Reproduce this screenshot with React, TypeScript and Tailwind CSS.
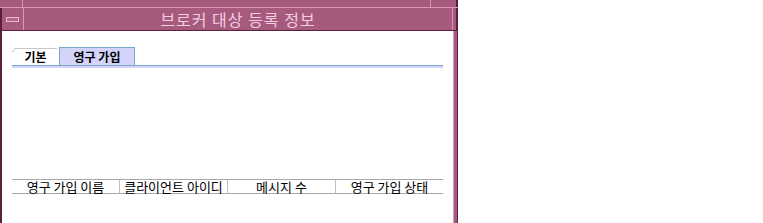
import React from 'react';

const columns = ['영구 가입 이름', '클라이언트 아이디', '메시지 수', '영구 가입 상태'];

export default function App() {
  return (
    <div className="w-[763px] h-[223px] bg-white flex" style={{ fontFamily: '"Noto Sans CJK KR", "Noto Sans", sans-serif' }}>
      {/* Window */}
      <div className="w-[458px] h-full flex flex-col">
        {/* Top frame band */}
        <div className="h-[8px] bg-[#a65a7e] border-b border-[#d898b8] flex">
          <div className="w-[23px] border-r border-[#d898b8]" />
          <div className="flex-1 border-r border-[#d898b8]" />
          <div className="w-[27px] border-r-2 border-[#5a2040]" />
        </div>
        {/* Title bar */}
        <div className="h-[23px] flex bg-[#a65a7e] border-b border-[#5a2040]">
          <div className="w-[24px] border-l-2 border-l-[#5a2040] border-r border-r-[#d898b8] flex items-center justify-center">
            <div className="w-[13px] h-[5px] border border-[#e8b8d0] bg-[#b8658c]" />
          </div>
          <div className="flex-1 flex items-center justify-center text-[16px] leading-none text-[#f4cce4] tracking-[1px] border-r border-[#d898b8]">
            브로커 대상 등록 정보
          </div>
          <div className="w-[5px] border-r-2 border-[#5a2040]" />
        </div>
        {/* Body */}
        <div className="flex-1 flex">
          <div className="w-[2px] bg-[#5a2040]" />
          <div className="flex-1 flex flex-col pl-[10px] pr-[10px] pt-[16px]">
            {/* Tabs */}
            <div className="flex items-end h-[18px] pl-[2px]">
              <div className="relative h-[17px] w-[43px] border-t border-[#c8c8c8] flex items-center justify-center text-[12px] font-bold text-black leading-none">
                <div className="absolute left-[-3px] top-[0px] w-[4px] h-[1px] bg-[#c8c8c8] rotate-[-45deg] origin-right" />
                기본
              </div>
              <div className="relative h-[18px] w-[76px] ml-[2px] bg-[#d4d4fa] border-t border-l border-r border-[#78aac8] flex items-center justify-center text-[12px] font-bold text-black leading-none">
                영구 가입
              </div>
            </div>
            <div className="h-[1px] bg-[#78aac8]" />
            <div className="h-[2px] bg-[#d4d4fa]" />
            <div className="h-[111px]" />
            {/* Table header */}
            <div className="flex border-t border-b border-[#a8a8a8] h-[15px] text-[13px] leading-none text-black">
              {columns.map((c, i) => (
                <div
                  key={c}
                  className={`flex-1 flex items-center justify-center ${i < columns.length - 1 ? 'border-r border-[#c0c0c0]' : ''}`}
                >
                  {c}
                </div>
              ))}
            </div>
          </div>
          <div className="w-[5px] bg-[#a65a7e] border-l border-l-[#d898b8] border-r border-r-[#5a2040]" />
        </div>
      </div>
    </div>
  );
}
